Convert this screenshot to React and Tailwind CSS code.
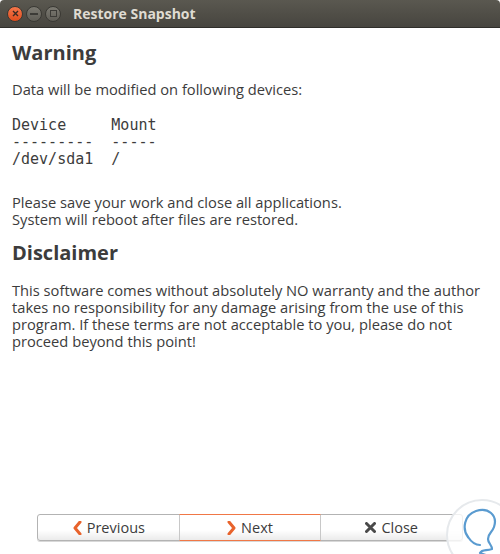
import React from 'react';

const sans = { fontFamily: '"Open Sans", "Noto Sans", sans-serif' };

function TitleBar() {
  return (
    <div className="h-[28px] flex items-center bg-gradient-to-b from-[#5a5850] to-[#47453f] border-b border-[#2f2e2a] rounded-t-[4px]">
      <div className="flex items-center gap-[3px] pl-[7px]">
        <div className="w-[16px] h-[16px] rounded-full bg-gradient-to-b from-[#f4764a] to-[#e04d1b] border border-[#3a3934] flex items-center justify-center">
          <svg width="7" height="7" viewBox="0 0 7 7">
            <path d="M1 1L6 6M6 1L1 6" stroke="#3b2a22" strokeWidth="1.4" />
          </svg>
        </div>
        <div className="w-[16px] h-[16px] rounded-full bg-gradient-to-b from-[#7c7a72] to-[#5f5d56] border border-[#3a3934] flex items-center justify-center">
          <div className="w-[8px] h-[2px] bg-[#3c3b37]" />
        </div>
        <div className="w-[16px] h-[16px] rounded-full bg-gradient-to-b from-[#7c7a72] to-[#5f5d56] border border-[#3a3934] flex items-center justify-center">
          <div className="w-[7px] h-[7px] border-[1.5px] border-[#3c3b37]" />
        </div>
      </div>
      <div className="ml-[12px] text-[14px] font-bold text-[#dfdbd2]" style={sans}>
        Restore Snapshot
      </div>
    </div>
  );
}

function Chevron({ dir }) {
  const d = dir === 'left' ? 'M8 1L3 7L8 13' : 'M2 1L7 7L2 13';
  return (
    <svg width="10" height="14" viewBox="0 0 10 14">
      <path d={d} fill="none" stroke="#e8632c" strokeWidth="3" strokeLinejoin="round" strokeLinecap="round" />
    </svg>
  );
}

export default function App() {
  return (
    <div className="w-[500px] h-[554px] bg-white flex flex-col relative overflow-hidden text-[#3c3c3c]" style={sans}>
      <TitleBar />
      <div className="flex-1 px-[12px] pt-[12px]">
        <h1 className="text-[20px] font-bold leading-[26px]">Warning</h1>
        <p className="text-[14.7px] leading-[18px] mt-[14px]">Data will be modified on following devices:</p>
        <pre className="text-[15px] leading-[17px] mt-[19px]" style={{ fontFamily: '"DejaVu Sans Mono", monospace' }}>
{`Device     Mount
---------  -----
/dev/sda1  /`}
        </pre>
        <p className="text-[14.7px] leading-[17px] mt-[26px] whitespace-pre-line">
          {'Please save your work and close all applications.\nSystem will reboot after files are restored.'}
        </p>
        <h1 className="text-[20px] font-bold leading-[26px] mt-[12px]">Disclaimer</h1>
        <p className="text-[14.7px] leading-[17px] mt-[16px] pr-[8px]">
          This software comes without absolutely NO warranty and the author takes no responsibility for any damage arising from the use of this program. If these terms are not acceptable to you, please do not proceed beyond this point!
        </p>
      </div>
      <div className="flex justify-center pb-[13px]">
        <div className="flex w-[426px] h-[27px] rounded-[3px] border border-[#b3b3b3] bg-gradient-to-b from-white from-60% to-[#ebebeb] text-[14.5px] text-[#3c3c3c] shadow-[0_1px_0_#d8d8d8]">
          <button className="flex-1 flex items-center justify-center gap-[5px]">
            <Chevron dir="left" />
            Previous
          </button>
          <button className="flex-1 flex items-center justify-center gap-[4px] border-l border-r border-[#c8c8c8] border-t-[1.5px] border-t-[#f07746] border-b-[1.5px] border-b-[#f07746] -my-px">
            <Chevron dir="right" />
            Next
          </button>
          <button className="flex-1 flex items-center justify-center gap-[5px]">
            <svg width="11" height="11" viewBox="0 0 11 11">
              <path d="M1.5 1.5L9.5 9.5M9.5 1.5L1.5 9.5" stroke="#4a4a4a" strokeWidth="3" strokeLinecap="round" />
            </svg>
            Close
          </button>
        </div>
      </div>
      <div className="absolute left-[446px] top-[499px] w-[72px] h-[72px] rounded-full border-2 border-[#e6e9ec] bg-white/80">
        <svg width="72" height="72" viewBox="0 0 72 72" className="absolute -left-[2px] -top-[2px]">
          <path
            d="M22 38C16 30 18 16 30 12C42 8 52 16 48 28C46 34 42 34 42 40C42 44 46 46 46 50C40 52 36 50 34 54C38 56 42 56 44 58C38 60 34 60 30 62"
            fill="none"
            stroke="#5a9bd0"
            strokeWidth="2.2"
            strokeLinecap="round"
            strokeLinejoin="round"
          />
          <path d="M22 38C26 44 30 46 34 46" fill="none" stroke="#5a9bd0" strokeWidth="2.2" strokeLinecap="round" />
        </svg>
      </div>
    </div>
  );
}
